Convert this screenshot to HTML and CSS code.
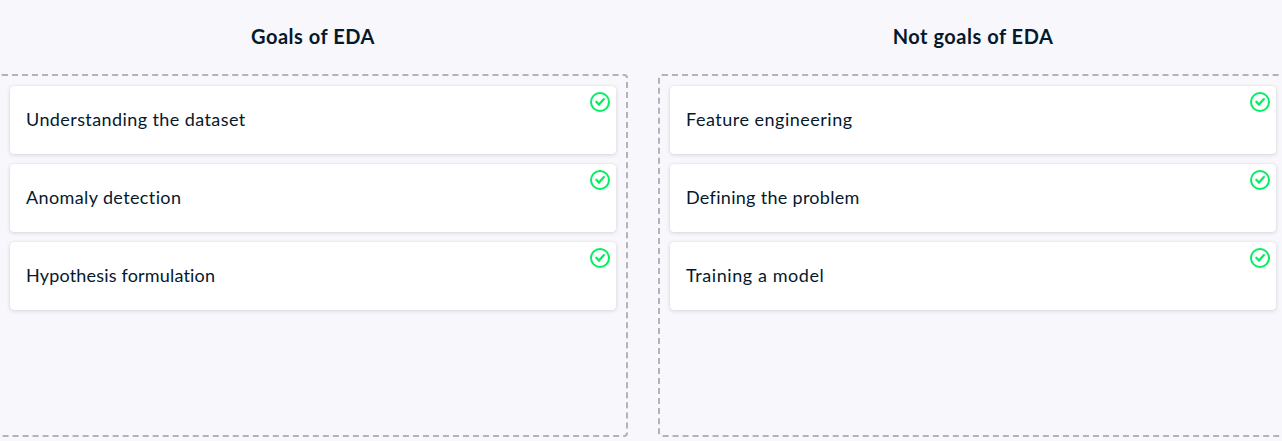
FILE: index.html
```
<!DOCTYPE html>
<html lang="en">
<head>
<meta charset="utf-8">
<title>Goals of EDA</title>
<link rel="stylesheet" href="styles.css">
</head>
<body>
<svg width="0" height="0" class="defs"><symbol id="check" viewBox="0 0 20 20"><circle cx="10" cy="10" r="9" fill="none" stroke="currentColor" stroke-width="2"/><path d="M6.3 9.7 9 12.6 13.9 7.1" fill="none" stroke="currentColor" stroke-width="2.2" stroke-linejoin="miter" stroke-linecap="round"/></symbol></svg>
<main class="board">
<section class="column">
<h2 class="title">Goals of EDA</h2>
<div class="zone">
<div class="card"><span class="w-understanding">Understanding the dataset</span><svg class="icon"><use href="#check"/></svg></div>
<div class="card"><span class="w-anomaly">Anomaly detection</span><svg class="icon"><use href="#check"/></svg></div>
<div class="card"><span class="w-hypothesis">Hypothesis formulation</span><svg class="icon"><use href="#check"/></svg></div>
</div>
</section>
<section class="column">
<h2 class="title">Not goals of EDA</h2>
<div class="zone">
<div class="card"><span class="w-feature">Feature engineering</span><svg class="icon"><use href="#check"/></svg></div>
<div class="card"><span class="w-problem">Defining the problem</span><svg class="icon"><use href="#check"/></svg></div>
<div class="card"><span class="w-training">Training a model</span><svg class="icon"><use href="#check"/></svg></div>
</div>
</section>
</main>
</body>
</html>
```
FILE: styles.css
```
* { box-sizing: border-box; }
body {
  margin: 0;
  height: 441px;
  overflow: hidden;
  background: #f7f7fc;
  color: #05192d;
  font-family: Lato, "Liberation Sans", sans-serif;
}
.defs { display: none; }
.board {
  display: grid;
  grid-template-columns: 630px 630px;
  column-gap: 30px;
  margin-left: -2px;
}
.title {
  margin: 0;
  height: 74px;
  line-height: 73px;
  font-size: 20px;
  font-weight: 700;
  letter-spacing: .52px;
  text-align: center;
}
.zone {
  display: flex;
  flex-direction: column;
  gap: 10px;
  height: 363px;
  padding: 10px;
  border: 2px dashed #b0b4be;
  border-radius: 4px;
}
.card {
  display: flex;
  align-items: center;
  justify-content: space-between;
  height: 68px;
  padding: 0 6px 0 16px;
  border-radius: 4px;
  background: #fff;
  box-shadow: 0 0 1px rgba(5, 25, 45, .12), 0 1px 4px rgba(5, 25, 45, .14);
  font-size: 18px;
  line-height: 26px;
  white-space: nowrap;
}
.card span { padding-bottom: 2px; }
.w-understanding { letter-spacing: .41px; }
.w-anomaly { letter-spacing: .38px; }
.w-hypothesis { letter-spacing: .18px; }
.w-feature { letter-spacing: .5px; }
.w-problem { letter-spacing: .3px; }
.w-training { letter-spacing: .58px; }
.icon {
  align-self: flex-start;
  width: 20px;
  height: 20px;
  margin-top: 6px;
  color: #03ef62;
}
```
